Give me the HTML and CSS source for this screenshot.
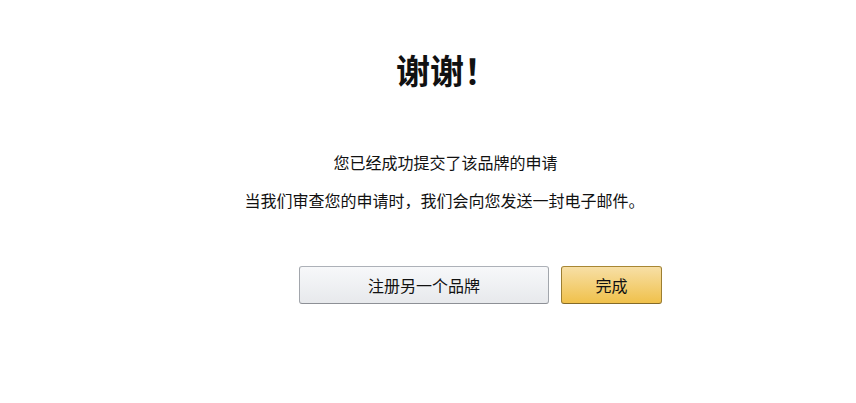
FILE: index.html
```html
<!DOCTYPE html>
<html lang="zh-CN">
<head>
<meta charset="utf-8">
<link rel="stylesheet" href="styles.css">
</head>
<body>
<main class="page">
  <section class="message">
    <h1 class="title">谢谢！</h1>
    <p class="line line-first">您已经成功提交了该品牌的申请</p>
    <p class="line line-second">当我们审查您的申请时，我们会向您发送一封电子邮件。</p>
  </section>
  <div class="actions">
    <button class="btn btn-secondary" type="button">注册另一个品牌</button>
    <button class="btn btn-primary" type="button">完成</button>
  </div>
</main>
</body>
</html>
```
FILE: styles.css
```css
html, body {
  margin: 0;
  padding: 0;
  background: #ffffff;
}

body {
  font-family: "Noto Sans CJK SC", "Noto Sans", "Liberation Sans", sans-serif;
  color: #111111;
}

.page {
  width: 856px;
  height: 403px;
  display: flex;
  flex-direction: column;
}

.message {
  padding-left: 30px;
  text-align: center;
}

.title {
  margin: 50px 0 0;
  padding-left: 8px;
  font-size: 34px;
  line-height: 40px;
  font-weight: 700;
  color: #111111;
}

.line {
  margin: 0;
  font-size: 16px;
  line-height: 20px;
}

.line-first {
  margin-top: 62px;
  padding-left: 5px;
}

.line-second {
  margin-top: 18px;
  padding-left: 3px;
}

.actions {
  margin-top: 56px;
  padding-left: 105px;
  display: flex;
  justify-content: center;
  gap: 12px;
}

.btn {
  height: 38px;
  box-sizing: border-box;
  border-radius: 3px;
  border: 1px solid;
  font-family: inherit;
  font-size: 16px;
  color: #111111;
  padding: 0;
  cursor: pointer;
}

.btn-secondary {
  width: 250px;
  background: linear-gradient(to bottom, #f7f8fa, #e7e9ec);
  border-color: #adb1b8 #a2a6ac #8d9096;
}

.btn-primary {
  width: 101px;
  background: linear-gradient(to bottom, #f7dfa5, #f0c14b);
  border-color: #a88734 #9c7e31 #846a29;
}
```
